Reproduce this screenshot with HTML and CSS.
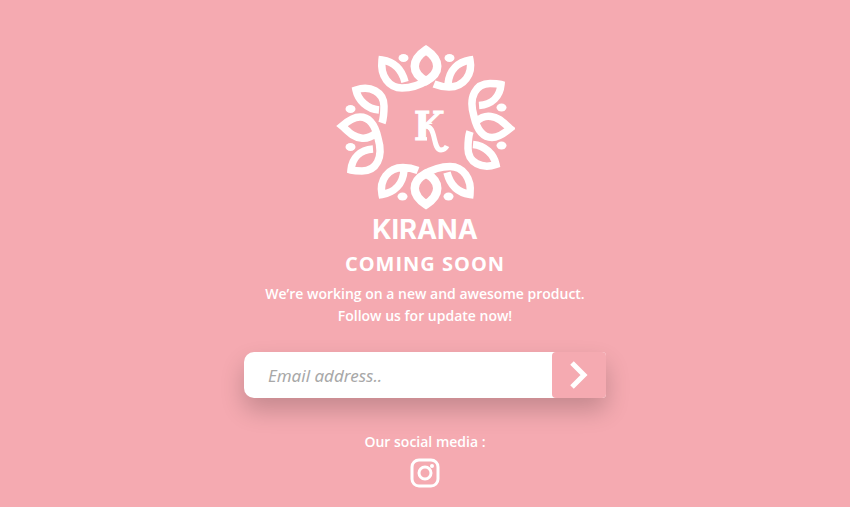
FILE: index.html
```html
<!DOCTYPE html>
<html lang="en">
<head>
<meta charset="utf-8">
<meta name="viewport" content="width=device-width, initial-scale=1">
<title>Kirana</title>
<link rel="stylesheet" href="styles.css">
</head>
<body>
<main class="page">
  <svg class="emblem" viewBox="335 43 180 168" aria-hidden="true">
    <defs>
      <g id="half-wreath">
        <g class="stroke">
          <path class="wide" d="M426 50C411 60 411 73 426 81C441 73 441 60 426 50Z"/>
          <path d="M405 82C402 70 395 62 382 60C380 76 389 88 402 88C412 88 420 85 428 80"/>
          <path d="M448 84C449 70 458 62 470 60C473 74 464 87 449 87C443 87 439 86 434 84"/>
          <path d="M379 110C367 109 358 100 356 90C370 85 384 92 384 106C384 112 384 117 382 123"/>
          <path d="M376 133C370 138 366 139 361 138C353 137 349 132 342 126C349 120 354 117 360 117C369 117 375 125 378 138C384 158 376 171 362 171C358 171 355 171 351 170C352 158 360 150 373 149"/>
        </g>
        <g class="fill">
          <ellipse cx="403.500" cy="58" rx="5" ry="4"/>
          <ellipse cx="449.500" cy="58" rx="5" ry="4"/>
          <ellipse cx="350.500" cy="109" rx="5" ry="4"/>
          <ellipse cx="350.500" cy="147" rx="5" ry="4"/>
        </g>
      </g>
      <clipPath id="monogram-top">
        <path d="M410 105H450V124H427V145H410Z"/>
      </clipPath>
    </defs>
    <use href="#half-wreath"/>
    <use href="#half-wreath" transform="rotate(180 426 127.250)"/>
    <text class="monogram" x="414" y="140" clip-path="url(#monogram-top)">K</text>
    <path class="swash" d="M424 126C437 124 432 150 441 150Q445 150 447 146"/>
  </svg>
  <h1 class="brand">KIRANA</h1>
  <h2 class="headline">COMING SOON</h2>
  <p class="lead">We’re working on a new and awesome product.<br>Follow us for update now!</p>
  <form class="signup">
    <input class="email" type="email" placeholder="Email address.." aria-label="Email address">
    <button class="submit" type="button" aria-label="Submit">
      <svg class="chevron" viewBox="0 0 18 28" aria-hidden="true"><path d="M2 2L14 14L2 26"/></svg>
    </button>
  </form>
  <p class="social-label">Our social media :</p>
  <a class="social" href="#" aria-label="Instagram">
    <svg class="instagram" viewBox="0 0 30 30" aria-hidden="true">
      <rect x="2" y="2" width="26" height="26" rx="7"/>
      <circle cx="15" cy="15" r="6"/>
      <circle class="lens" cx="22" cy="8" r="2"/>
    </svg>
  </a>
</main>
</body>
</html>
```
FILE: styles.css
```css
:root {
  --pink: #f5aab1;
}

* {
  box-sizing: border-box;
}

body {
  margin: 0;
  min-height: 100vh;
  background: var(--pink);
  color: #fff;
  font-family: "Open Sans", sans-serif;
}

.page {
  display: flex;
  flex-direction: column;
  align-items: center;
  padding: 43px 16px 16px;
}

.emblem {
  width: 180px;
  height: 168px;
}

.stroke path {
  fill: none;
  stroke: #fff;
  stroke-width: 7.500;
  stroke-miterlimit: 6;
}

.stroke .wide {
  stroke-width: 8.500;
}

.fill {
  fill: #fff;
}

.monogram {
  fill: #fff;
  stroke: #fff;
  stroke-width: 1;
  font: bold 39px "DejaVu Serif Condensed", "DejaVu Serif", serif;
}

.swash {
  fill: none;
  stroke: #fff;
  stroke-width: 5;
}

.brand {
  margin: 4px 0 0;
  font: bold 27px/30px Inter, sans-serif;
}

.headline {
  margin: 4px 0 0;
  font-size: 20px;
  font-weight: bold;
  line-height: 30px;
  letter-spacing: 1px;
}

.lead,
.social-label {
  margin: 4px 0 0;
  font-size: 14px;
  font-weight: 600;
  line-height: 22px;
  text-align: center;
}

.signup {
  display: flex;
  width: 100%;
  max-width: 362px;
  height: 46px;
  margin: 25px 0 0;
  border-radius: 10px 4px 4px 10px;
  background: #fff;
  box-shadow: 0 12px 24px rgba(0, 0, 0, 0.2);
}

.email {
  flex: 1;
  min-width: 0;
  padding: 0 24px;
  border: 0;
  border-radius: 10px 0 0 10px;
  background: transparent;
  color: #777;
  font: italic 17px "Noto Sans", sans-serif;
}

.email::placeholder {
  color: #a8a8a8;
}

.submit {
  display: flex;
  align-items: center;
  justify-content: center;
  width: 54px;
  padding: 0;
  border: 0;
  border-radius: 4px;
  background: var(--pink);
}

.chevron {
  width: 18px;
  height: 28px;
  fill: none;
  stroke: #fff;
  stroke-width: 5;
}

.social-label {
  margin-top: 33px;
}

.social {
  display: flex;
  margin-top: 5px;
}

.instagram {
  width: 30px;
  height: 30px;
  fill: none;
  stroke: #fff;
  stroke-width: 3;
}

.lens {
  fill: #fff;
  stroke: none;
}
```
